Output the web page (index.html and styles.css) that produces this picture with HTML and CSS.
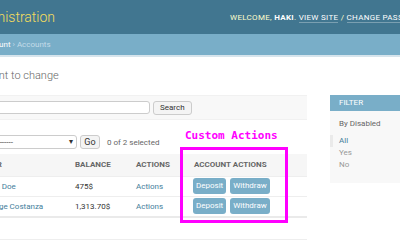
FILE: index.html
```html
<!DOCTYPE html>
<html>
<head>
<meta charset="utf-8">
<link rel="stylesheet" href="styles.css">
</head>
<body>
<div class="page">
  <div class="header">
    <div class="branding">Django administration</div>
    <div class="user-tools">Welcome, <strong>haki</strong>. <a href="#">View site</a> / <a href="#">Change password</a> / <a href="#">Log out</a></div>
  </div>
  <div class="breadcrumbs"><a href="#">Home</a> › <a href="#">Account</a> › Accounts</div>
  <div class="content">
    <h1 class="title">Select account to change</h1>
    <div class="changelist">
      <div class="results">
        <div class="toolbar">
          <input class="search-input" type="text">
          <button class="btn">Search</button>
        </div>
        <div class="actions">
          <span class="select-wrap"><select class="select"><option>---------</option></select></span>
          <button class="btn btn-go">Go</button>
          <span class="counter">0 of 2 selected</span>
        </div>
        <table class="result-table">
          <colgroup><col class="c1"><col class="c2"><col class="c3"><col class="c4"></colgroup>
          <thead>
            <tr><th>User</th><th>Balance</th><th>Actions</th><th>Account actions</th></tr>
          </thead>
          <tbody>
            <tr>
              <td><a href="#">John Doe</a></td>
              <td>475$</td>
              <td><a href="#">Actions</a></td>
              <td><span class="act-btns"><a class="act" href="#">Deposit</a><a class="act" href="#">Withdraw</a></span></td>
            </tr>
            <tr>
              <td><a href="#">George Costanza</a></td>
              <td>1,313.70$</td>
              <td><a href="#">Actions</a></td>
              <td><span class="act-btns"><a class="act" href="#">Deposit</a><a class="act" href="#">Withdraw</a></span></td>
            </tr>
          </tbody>
        </table>
        <div class="paginator">2 accounts</div>
      </div>
      <div class="filter">
        <h2 class="filter-title">Filter</h2>
        <h3 class="filter-sub">By Disabled</h3>
        <ul class="filter-list">
          <li class="selected"><a href="#">All</a></li>
          <li><a href="#">Yes</a></li>
          <li><a href="#">No</a></li>
        </ul>
      </div>
    </div>
  </div>
  <div class="note">Custom Actions</div>
  <div class="note-box"></div>
</div>
</body>
</html>
```
FILE: styles.css
```css
html, body {
  margin: 0;
  padding: 0;
  background: #fff;
  overflow: hidden;
}
body {
  font-family: Roboto, "Liberation Sans", sans-serif;
  font-size: 8px;
  color: #333;
}
.page {
  position: relative;
  width: 400px;
  height: 250px;
  overflow: hidden;
}
a { text-decoration: none; color: #447e9b; }

.header {
  height: 34px;
  background: #417690;
  display: flex;
  align-items: center;
  white-space: nowrap;
}
.branding {
  flex: none;
  width: 310px;
  margin-left: -80px;
  font-size: 14px;
  font-weight: 300;
  color: #f5dd5d;
}
.user-tools {
  flex: none;
  font-size: 8px;
  letter-spacing: 0.3px;
  text-transform: uppercase;
  color: #ffc;
}
.user-tools strong { color: #fff; font-weight: 700; }
.user-tools a {
  color: #fff;
  border-bottom: 1px solid rgba(255,255,255,0.3);
}

.breadcrumbs {
  height: 21px;
  line-height: 22px;
  background: #79aec8;
  border-bottom: 2px solid #d6e4ec;
  color: #c4dce8;
  font-size: 8px;
  white-space: nowrap;
  text-indent: -47px;
}
.breadcrumbs a { color: #fff; }

.content { padding-top: 12px; }
.title {
  margin: 0 0 12px -63px;
  font-size: 11px;
  line-height: 14px;
  font-weight: 300;
  color: #666;
  white-space: nowrap;
}
.changelist {
  display: flex;
  align-items: flex-start;
}
.results {
  flex: none;
  width: 327px;
  margin-left: -20px;
}
.toolbar {
  height: 25px;
  background: #f8f8f8;
  display: flex;
  align-items: center;
  padding-left: 8px;
  gap: 3px;
  border-top: 1px solid #f1f1f1;
  border-bottom: 1px solid #f1f1f1;
  box-sizing: border-box;
}
.search-input {
  width: 162px;
  height: 13px;
  box-sizing: border-box;
  border: 1px solid #ccc;
  border-radius: 3px;
  background: #fff;
  margin: 0;
  padding: 0;
}
.btn {
  height: 14px;
  box-sizing: border-box;
  padding: 0 6px;
  margin: 0;
  border: 1px solid #ccc;
  border-radius: 3px;
  background: #f4f4f4;
  font-family: Roboto, "Liberation Sans", sans-serif;
  font-size: 8px;
  color: #333;
  line-height: 12px;
}
.actions {
  display: flex;
  align-items: center;
  padding: 15px 0 5px 0;
}
.select-wrap {
  position: relative;
  display: inline-block;
}
.select-wrap::after {
  content: "▾";
  position: absolute;
  right: 4px;
  top: 1px;
  font-size: 8px;
  line-height: 12px;
  color: #333;
  pointer-events: none;
}
.select {
  -webkit-appearance: none;
  appearance: none;
  width: 97px;
  height: 14px;
  box-sizing: border-box;
  margin: 0;
  padding: 0 0 0 12px;
  border: 1px solid #ccc;
  border-radius: 3px;
  background: #fff;
  font-family: Roboto, "Liberation Sans", sans-serif;
  font-size: 8px;
  color: #333;
}
.btn-go {
  width: 20px;
  padding: 0;
  margin-left: 3px;
  font-size: 9px;
}
.counter {
  margin-left: 7px;
  color: #666;
  font-size: 8px;
}

.result-table {
  width: 330px;
  margin-left: -3px;
  table-layout: fixed;
  border-collapse: collapse;
  border-bottom: 2px solid #eaeaea;
}
.c1 { width: 93px; }
.c2 { width: 61px; }
.c3 { width: 58px; }
.c4 { width: 118px; }
.result-table th {
  height: 22px;
  box-sizing: border-box;
  padding: 0 5px;
  background: #f6f6f6;
  text-align: left;
  text-transform: uppercase;
  font-weight: 700;
  font-size: 8px;
  color: #666;
  white-space: nowrap;
  border-bottom: 1px solid #eee;
}
.result-table td {
  height: 19px;
  padding: 0 5px;
  border-bottom: 1px solid #eee;
  white-space: nowrap;
  font-size: 8px;
  color: #333;
  vertical-align: middle;
}
.act-btns {
  display: inline-flex;
  gap: 4px;
  margin-left: -1px;
  vertical-align: middle;
}
.act {
  display: inline-block;
  height: 16px;
  line-height: 16px;
  padding: 0 3px;
  border-radius: 3px;
  background: #79aec8;
  color: #fff;
  font-size: 8px;
}
.paginator {
  margin-top: 21px;
  border-top: 1px solid #eee;
  padding-top: 16px;
  color: #666;
}

.filter {
  flex: none;
  width: 160px;
  margin-left: 23px;
  background: #f8f8f8;
  padding-bottom: 12px;
}
.filter-title {
  margin: 0;
  height: 16px;
  line-height: 16px;
  padding-left: 9px;
  background: #79aec8;
  color: #fff;
  font-size: 8px;
  font-weight: 400;
  text-transform: uppercase;
}
.filter-sub {
  margin: 8px 9px 6px;
  font-size: 8px;
  line-height: 10px;
  font-weight: 400;
  color: #666;
}
.filter-list {
  list-style: none;
  margin: 0;
  padding: 0;
}
.filter-list li {
  line-height: 12px;
  padding-left: 9px;
}
.filter-list li a { color: #999; }
.filter-list li.selected {
  border-left: 3px solid #eaeaea;
  padding-left: 6px;
}
.filter-list li.selected a { color: #447e9b; }

.note {
  position: absolute;
  left: 185px;
  top: 129px;
  font-family: "DejaVu Sans Mono", "Liberation Mono", monospace;
  font-weight: 700;
  font-size: 11px;
  line-height: 14px;
  color: #ff00ff;
  white-space: nowrap;
}
.note-box {
  position: absolute;
  left: 180px;
  top: 147px;
  width: 108px;
  height: 76px;
  box-sizing: border-box;
  border: 3px solid #ff00ff;
}
```
